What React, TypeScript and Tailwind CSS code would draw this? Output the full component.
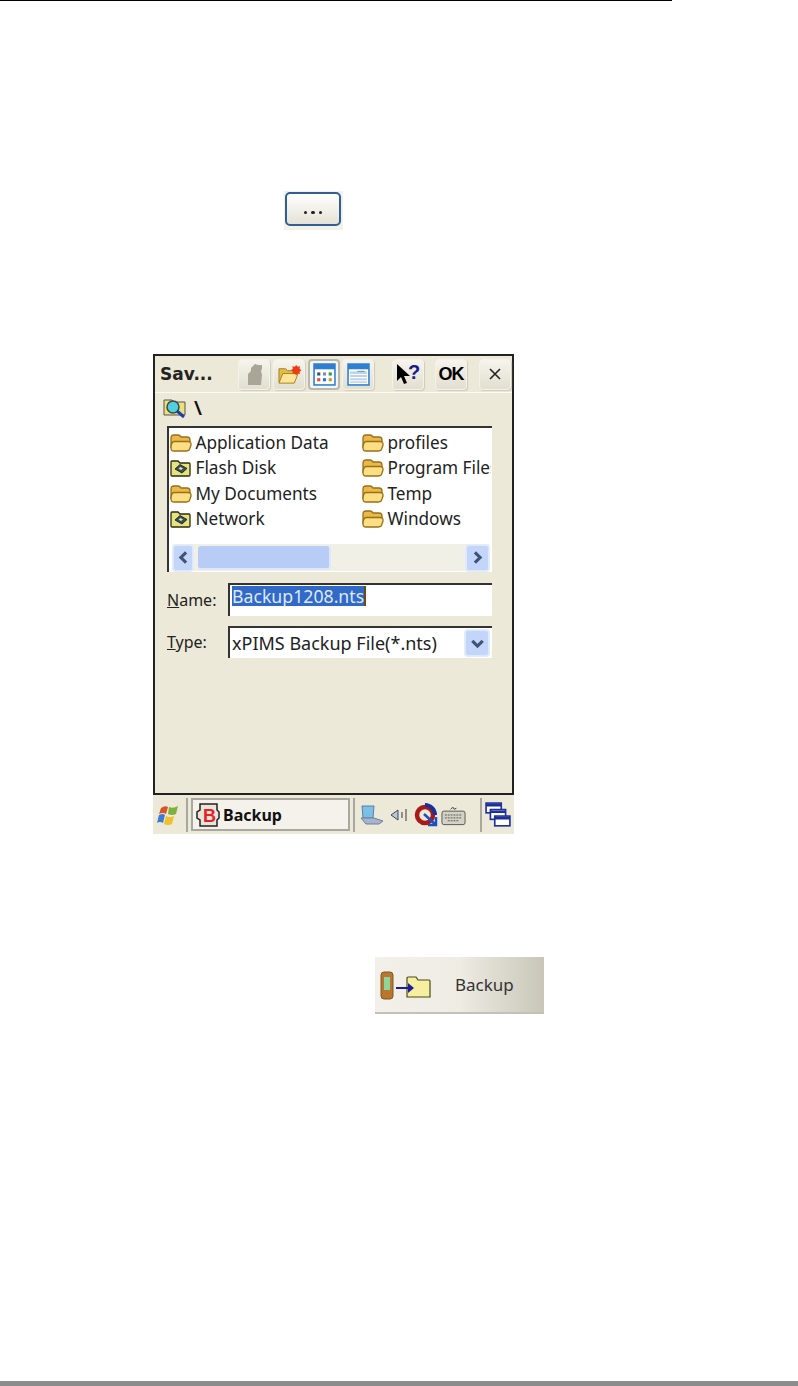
const FONT = "font-['Noto_Sans','Open_Sans',sans-serif]";

const Folder = () => (
  <svg viewBox="0 0 22 18" className="w-[22px] h-[18px] shrink-0">
    <path d="M1 14V4q0-3 3-3h4q2 0 3 2h6q3 0 3 3v4H1Z" fill="#e9b949" stroke="#9a6f16" strokeWidth="1.300" />
    <path d="M1 14q0-6 3-6.500h14q3.500 0 3 3.500l-1 3q-.5 3-3.500 3H4q-3 0-3-3Z" fill="#fbdf85" stroke="#9a6f16" strokeWidth="1.300" />
  </svg>
);

const DriveFolder = () => (
  <svg viewBox="0 0 22 18" className="w-[22px] h-[18px] shrink-0">
    <path d="M1 16V3q0-1 1-1h6l2 2h9q1 0 1 1v11q0 1-1 1H2q-1 0-1-1Z" fill="#e6e27e" stroke="#2c2c10" strokeWidth="1.300" />
    <path d="m5 10 5-4.500 7 4-5 4.500Z" fill="#37505c" stroke="#111" strokeWidth=".8" />
    <path d="m8.500 9.500 2-1.500 2.500 1.500-2 1.500Z" fill="#dfe8a0" />
  </svg>
);

const ToolButton = ({ children, pressed = false, className = '' }: { children: React.ReactNode; pressed?: boolean; className?: string }) => (
  <div className={`h-[31px] w-[32px] shrink-0 flex items-center justify-center rounded-[4px] ${className} ${pressed ? 'bg-[#f6f5ef] border-2 border-[#b9b8ae]' : 'bg-gradient-to-b from-[#f6f4ec] to-[#e2dfd0] border border-[#f4f2ea] shadow-[1px_1px_1px_#cfcbb8]'}`}>
    {children}
  </div>
);

const GridIcon = ({ wide = false }: { wide?: boolean }) => (
  <svg viewBox="0 0 22 22" className="w-[23px] h-[23px]">
    <rect x="1" y="1" width="20" height="20" fill="#fff" stroke="#2f7fd0" strokeWidth="1.500" />
    <rect x="1" y="1" width="20" height="5" fill="#2f7fd0" />
    {wide ? (
      <>
        <rect x="3" y="8" width="16" height="11" fill="#bcd3ec" />
        <path d="M3 11h16M3 14h16M3 17h16" stroke="#fff" />
        <path d="M10 8h7" stroke="#7b93ad" />
      </>
    ) : (
      <>
        <path d="M4 9h3v3H4z" fill="#33518f" />
        <path d="M9.500 9h3v3h-3z" fill="#7d8fb0" />
        <path d="M15 9h3v3h-3z" fill="#2f9a4d" />
        <path d="M4 14.500h3v3H4z" fill="#e0503a" />
        <path d="M9.500 14.500h3v3h-3z" fill="#2f6fd0" />
        <path d="M15 14.500h3v3h-3z" fill="#c69a2a" />
      </>
    )}
  </svg>
);

const Row = ({ drive = false, label }: { drive?: boolean; label: string }) => (
  <div className="flex items-center h-[25.500px] min-w-0">
    {drive ? <DriveFolder /> : <Folder />}
    <span className="ml-[3.500px] text-[17.200px] leading-[22px] text-[#222] whitespace-nowrap">{label}</span>
  </div>
);

const ScrollBtn = ({ dir, className = '' }: { dir: 'l' | 'r' | 'd'; className?: string }) => (
  <div className={`flex items-center justify-center rounded-[3px] bg-[#c3d5f8] border border-[#dfe8fb] shadow-[0_0_0_1px_#e4ebfa] shrink-0 ${className}`}>
    <svg viewBox="0 0 10 10" className="w-[13px] h-[13px]">
      <path d={dir === 'l' ? 'M7 1 3 5l4 4' : dir === 'r' ? 'M3 1l4 4-4 4' : 'M1 3l4 4 4-4'} fill="none" stroke="#3f5378" strokeWidth="2.400" />
    </svg>
  </div>
);

const TaskbarSep = ({ className = '' }: { className?: string }) => <div className={`w-[2px] h-[34px] bg-[#a9a89e] shrink-0 ${className}`} />;

export default function App() {
  return (
    <div className={`relative w-[798px] h-[1386px] bg-white overflow-hidden flex flex-col ${FONT}`}>
      <div className="w-[672px] h-[1px] bg-black shrink-0" />

      {/* browse button */}
      <div className="mt-[190px] ml-[284px] w-[59px] h-[39px] bg-[#ece9d8]/60 pl-[1px] pt-[1px] shrink-0">
        <div className="w-[56px] h-[34px] rounded-[5px] border-2 border-[#2f5f95] bg-gradient-to-b from-white to-[#e5e2d6] flex items-end justify-center gap-[4px] pb-[10px]">
          <span className="w-[3.500px] h-[3.500px] bg-[#222] rounded-full" />
          <span className="w-[3.500px] h-[3.500px] bg-[#222] rounded-full" />
          <span className="w-[3.500px] h-[3.500px] bg-[#222] rounded-full" />
        </div>
      </div>

      {/* device window */}
      <div className="mt-[124px] ml-[153px] w-[361px] shrink-0 flex flex-col">
        <div className="h-[441px] border-2 border-[#222] bg-[#ece9d8] flex flex-col">
          <div className="h-[37px] flex items-center pl-[5px] border-b border-b-[#fbfaf5] shrink-0">
            <span className="w-[78px] text-[17px] font-bold leading-none text-[#222] font-['DejaVu_Sans',sans-serif]">Sav...</span>
            <div className="flex gap-[3px]">
              <ToolButton>
                <svg viewBox="0 0 24 24" className="w-[24px] h-[24px]">
                  <path d="M6 23V12l3-3V6l4-4 3 1 4 0v4l-1 2 1 4-1 10Z" fill="#a9a697" />
                </svg>
              </ToolButton>
              <ToolButton>
                <svg viewBox="0 0 26 24" className="w-[25px] h-[23px]">
                  <path d="M2 20V6h7l2 2h7v12Z" fill="#e3bb4a" stroke="#a87f1e" />
                  <path d="M2 21 6 11h16l-4 10Z" fill="#fbe596" stroke="#a87f1e" />
                  <path d="m20 2 1.500 2 2.500-.5-.5 2.500 2 1.500-2 1.500.5 2.500-2.500-.5L20 13l-1.500-2-2.500.5.5-2.500-2-1.500 2-1.500-.5-2.500 2.500.5Z" fill="#ef3b14" />
                </svg>
              </ToolButton>
              <ToolButton pressed><GridIcon /></ToolButton>
              <ToolButton className="-ml-[1px]"><GridIcon wide /></ToolButton>
            </div>
            <ToolButton className="ml-[18px]">
              <svg viewBox="0 0 26 24" className="w-[26px] h-[24px]">
                <path d="m2 2 0 17 4-4 3 7 3-1-3-7h6Z" fill="#000" />
                <text x="13" y="17" fontSize="20" fontWeight="700" fill="#1b1b8f" fontFamily="'Liberation Sans',sans-serif">?</text>
              </svg>
            </ToolButton>
            <ToolButton className="ml-[11px]">
              <span className="text-[18px] font-bold leading-none text-black font-['Liberation_Sans',sans-serif] tracking-[-1px]">OK</span>
            </ToolButton>
            <ToolButton className="ml-[12px]">
              <svg viewBox="0 0 14 14" className="w-[14px] h-[14px]">
                <path d="m2 2 10 10M12 2 2 12" stroke="#222" strokeWidth="1.600" />
              </svg>
            </ToolButton>
          </div>

          <div className="h-[30px] flex items-center pl-[8px] gap-[7px] shrink-0">
            <svg viewBox="0 0 24 24" className="w-[24px] h-[24px]">
              <path d="M1 19V4h8l2 2h11v13Z" fill="#ebe07c" stroke="#555" />
              <circle cx="10" cy="11" r="6" fill="#4fd0e0" stroke="#444" strokeWidth="1.500" />
              <path d="m14 15 7 6" stroke="#1c3fae" strokeWidth="3" />
            </svg>
            <span className="text-[20px] font-semibold leading-none text-[#111]">\</span>
          </div>

          <div className="mt-[3px] ml-[12px] w-[325px] h-[146px] bg-white border-t-2 border-l-2 border-t-[#333] border-l-[#333] flex flex-col shrink-0">
            <div className="grid grid-cols-[192px_129px] pl-[1px]">
              <div className="flex flex-col pt-[2px]">
                <Row label="Application Data" />
                <Row drive label="Flash Disk" />
                <Row label="My Documents" />
                <Row drive label="Network" />
              </div>
              <div className="flex flex-col pt-[2px] min-w-0 overflow-hidden">
                <Row label="profiles" />
                <Row label="Program Files" />
                <Row label="Temp" />
                <Row label="Windows" />
              </div>
            </div>
            <div className="mt-[12px] ml-[4px] h-[27px] w-[316px] flex items-center bg-[#f1f0e6]">
              <ScrollBtn dir="l" className="w-[20px] h-[26px]" />
              <div className="ml-[5px] w-[133px] h-[24px] rounded-[3px] bg-[#b8cdf5] border-r-2 border-b-2 border-r-[#dfe8fb] border-b-[#dfe8fb]" />
              <div className="flex-1" />
              <ScrollBtn dir="r" className="w-[23px] h-[26px]" />
            </div>
          </div>

          <div className="mt-[11px] ml-[12px] flex items-center shrink-0">
            <span className="w-[61px] text-[16px] leading-[22px] text-[#222]"><span className="underline">N</span>ame:</span>
            <div className="w-[264px] h-[33px] bg-white border-t-2 border-l-2 border-t-[#333] border-l-[#333] pl-[2px] pt-[1px]">
              <div className="h-[20px] w-[134px] bg-[#3169c6] text-[#dfe8ff] text-[17.700px] leading-[20px] whitespace-nowrap border-r-2 border-r-[#6b4a1a]">Backup1208.nts</div>
            </div>
          </div>

          <div className="mt-[10px] ml-[12px] flex items-center shrink-0">
            <span className="w-[61px] text-[16px] leading-[22px] text-[#222]"><span className="underline">T</span>ype:</span>
            <div className="w-[264px] h-[32px] bg-white border-t-2 border-l-2 border-t-[#333] border-l-[#333] pl-[2px] pr-[3px] flex items-center justify-between">
              <span className="text-[18px] leading-[22px] text-[#222] whitespace-nowrap">xPIMS Backup File(*.nts)</span>
              <ScrollBtn dir="d" className="w-[24px] h-[26px]" />
            </div>
          </div>
        </div>

        {/* taskbar */}
        <div className="h-[39px] bg-[#ece9d8] flex items-center shrink-0">
          <svg viewBox="0 0 24 24" className="ml-[4px] w-[24px] h-[24px] shrink-0">
            <path d="M4 5q4-3 7-1l-2 7q-3-2-7 0Z" fill="#d9542b" />
            <path d="M12 4q4 2 9-1l-2 8q-4 2-8 0Z" fill="#7fb23a" />
            <path d="M2 12q4-2 6 0l-2 8q-3-2-6 0Z" fill="#3b7bd5" />
            <path d="M9 13q4 2 8 0l-2 8q-4 2-8 0Z" fill="#eec12f" />
          </svg>
          <TaskbarSep className="ml-[5px]" />
          <div className="ml-[3px] w-[159px] h-[33px] border-2 border-[#a9a89e] bg-[#f4f2ea] flex items-center pl-[2px] shrink-0">
            <svg viewBox="0 0 26 26" className="w-[26px] h-[26px] shrink-0">
              <path d="M5 2h17v6l2 2v6l-2 2v6H5v-6l-3-2v-6l3-2Z" fill="#e8e6da" stroke="#222" strokeWidth="1.500" />
              <text x="8" y="20" fontSize="18" fontWeight="700" fill="#e8202a" fontFamily="'Liberation Sans',sans-serif">B</text>
            </svg>
            <span className="ml-[2px] text-[16px] font-bold leading-[20px] text-[#111]">Backup</span>
          </div>
          <TaskbarSep className="ml-[3px]" />
          <svg viewBox="0 0 26 22" className="ml-[3px] w-[26px] h-[22px] shrink-0">
            <path d="M4 2h12l-1 12H5Z" fill="#7cc0ea" stroke="#5a7fa8" />
            <path d="M3 14h13l9 3-4 3H8Z" fill="#a8b4cc" stroke="#6f7f9e" />
          </svg>
          <svg viewBox="0 0 18 16" className="ml-[6px] w-[18px] h-[16px] shrink-0">
            <path d="M1 8 8 3v10Z" fill="#b8c6de" stroke="#445" />
            <path d="M12 5v6M16 2v12" stroke="#555" strokeWidth="1.200" />
          </svg>
          <svg viewBox="0 0 24 24" className="ml-[6px] w-[24px] h-[24px] shrink-0">
            <circle cx="11" cy="12" r="8" fill="none" stroke="#a81a1a" strokeWidth="4.500" />
            <path d="M11 2a10 10 0 0 1 10 10" stroke="#1c2f9a" strokeWidth="4" fill="none" />
            <path d="m10 11 12 11M22 14v8h-8" stroke="#1c4fc0" strokeWidth="2.500" fill="none" />
          </svg>
          <svg viewBox="0 0 26 24" className="ml-[3px] w-[25px] h-[24px] shrink-0">
            <rect x="1" y="8" width="24" height="14" rx="2" fill="#d4d2c6" stroke="#555" />
            <path d="M4 12h18M4 15h18M7 18h12" stroke="#555" strokeDasharray="2 1" />
            <path d="M10 6q3-3 3-1t3 0" fill="none" stroke="#333" />
          </svg>
          <TaskbarSep className="ml-[14px]" />
          <svg viewBox="0 0 24 24" className="ml-[3px] w-[26px] h-[26px] shrink-0">
            <rect x="1" y="1" width="14" height="9" fill="#fff" stroke="#1c2f9a" strokeWidth="1.500" />
            <rect x="5" y="7" width="14" height="9" fill="#fff" stroke="#1c2f9a" strokeWidth="1.500" />
            <rect x="9" y="13" width="14" height="9" fill="#fff" stroke="#1c2f9a" strokeWidth="1.500" />
            <path d="M1 3h14M5 9h14M9 15h14" stroke="#1c2f9a" strokeWidth="2.500" />
          </svg>
        </div>
      </div>

      {/* backup button image */}
      <div className="mt-[123px] ml-[375px] w-[169px] h-[57px] shrink-0 flex items-center bg-gradient-to-r from-[#f2f0e9] via-[#eeece3] to-[#c9c6b9] border-b-2 border-b-[#c4c2b6]">
        <svg viewBox="0 0 52 30" className="ml-[5px] w-[52px] h-[30px] shrink-0">
          <rect x="1" y="2" width="12" height="27" rx="3" fill="#b9772d" stroke="#7d5a2a" />
          <rect x="4" y="7" width="6" height="13" fill="#8fd49a" />
          <path d="M27 27V8q0-1 1-1h8l2 3h11q1 0 1 1v16Z" fill="#f6ef9f" stroke="#4a4a1a" strokeWidth="1.200" />
          <path d="M16 18h14" stroke="#1c1c9a" strokeWidth="2" />
          <path d="M28 13l6 5-6 5Z" fill="#1c1c9a" />
        </svg>
        <span className="ml-[23px] text-[17px] leading-[22px] text-[#333]">Backup</span>
      </div>

      <div className="mt-auto w-full h-[5px] bg-[#8c8c8c] shrink-0" />
    </div>
  );
}
